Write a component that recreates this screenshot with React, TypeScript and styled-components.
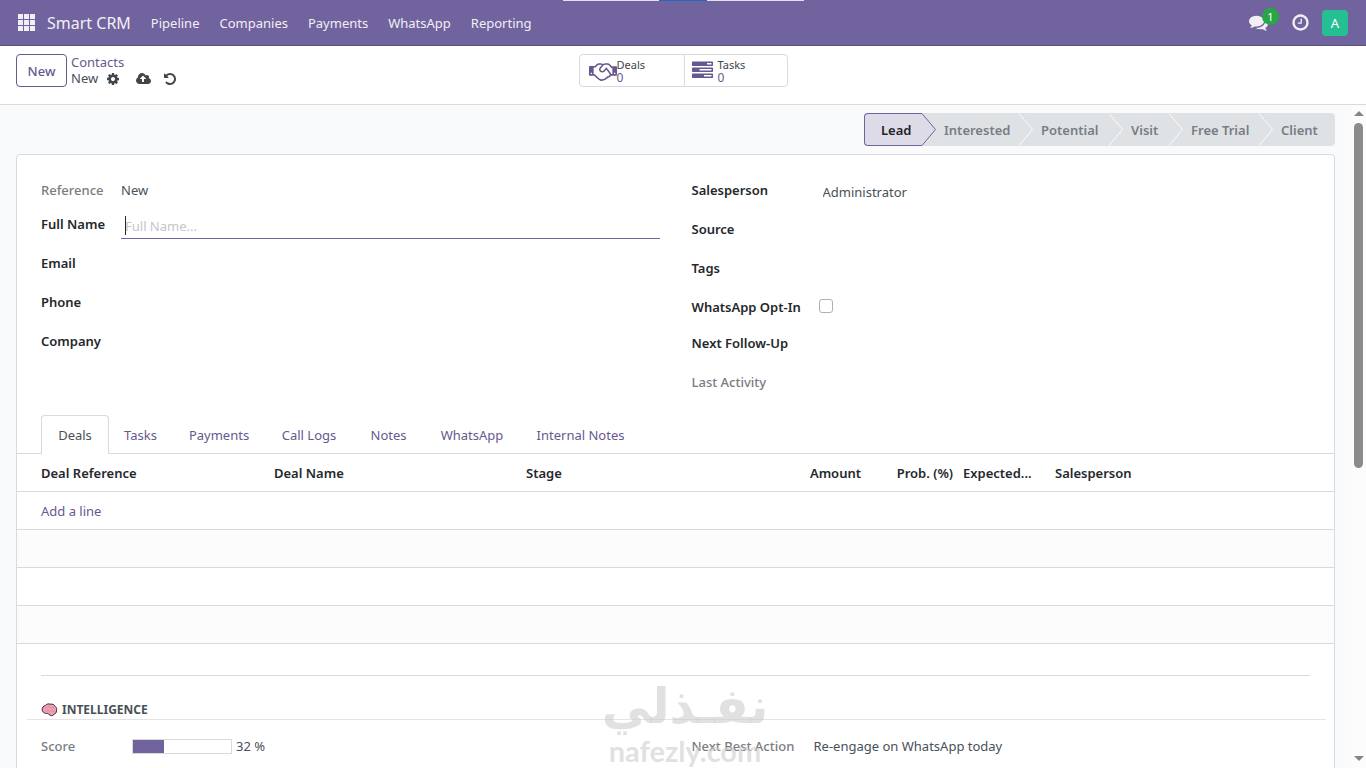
import React from "react";
import styled, { createGlobalStyle } from "styled-components";

const purple = "#71639e";
const linkColor = "#66598f";
const line = "#d8dadd";

const GlobalStyle = createGlobalStyle`
  *, *::before, *::after { box-sizing: border-box; }
  body {
    margin: 0;
    background: #fff;
    color: #495057;
    font: 400 13px/20px "Noto Sans", "Open Sans", sans-serif;
  }
  button, input { font: inherit; color: inherit; }
  button { background: none; border: 0; padding: 0; cursor: pointer; }
  a { text-decoration: none; color: inherit; }
`;

const Page = styled.div`
  position: relative;
  display: flex;
  flex-direction: column;
  height: 100vh;
  overflow: hidden;
`;

/* ---------- top navigation ---------- */

const Navbar = styled.header`
  position: relative;
  flex: none;
  display: flex;
  align-items: center;
  justify-content: space-between;
  height: 46px;
  padding: 0 18px;
  background: ${purple};
  border-bottom: 1px solid #5a4f7f;
  color: #f1eff5;
`;

const LoadStrip = styled.div`
  position: absolute;
  top: 0;
  left: 50%;
  width: 241px;
  height: 1px;
  margin-left: -120px;
  background: linear-gradient(90deg, #e2dfee 96px, #2668c0 96px, #2668c0 144px, #e2dfee 144px);
`;

const NavLinks = styled.nav`
  display: flex;
  align-items: center;
  gap: 20px;
`;

const NavLink = styled.a`
  font-size: 13px;
`;

const Brand = styled.a`
  margin-left: -8px;
  font-size: 16px;
`;

const Systray = styled.div`
  display: flex;
  align-items: center;
  gap: 12px;
`;

const TrayButton = styled.button`
  position: relative;
  display: flex;
  width: 30px;
  color: #f1eff5;
`;

const ClockButton = styled(TrayButton)`
  width: 19px;
`;

const Badge = styled.span`
  position: absolute;
  top: -5px;
  left: 13px;
  width: 17px;
  height: 17px;
  border-radius: 9px;
  background: #28a745;
  color: #fff;
  font-size: 11px;
  line-height: 17px;
  text-align: center;
`;

const Avatar = styled.button`
  width: 26px;
  height: 26px;
  border-radius: 4px;
  background: #24bf92;
  color: #fff;
`;

/* ---------- control panel ---------- */

const ControlPanel = styled.div`
  flex: none;
  display: grid;
  grid-template-columns: 1fr auto 1fr;
  align-items: start;
  height: 59px;
  padding: 8px 16px;
  border-bottom: 1px solid ${line};
`;

const CrumbArea = styled.div`
  display: flex;
  gap: 4px;
`;

const NewButton = styled.button`
  width: 51px;
  height: 33px;
  border: 1px solid ${linkColor};
  border-radius: 4px;
  color: ${linkColor};
  font-weight: 500;
`;

const Crumbs = styled.div`
  line-height: 17px;
`;

const CrumbLink = styled.a`
  display: block;
  height: 16px;
  color: ${linkColor};
`;

const CrumbRow = styled.div`
  display: flex;
  align-items: center;
`;

const IconButton = styled.button<{ $gap: number }>`
  display: flex;
  margin-left: ${(p) => p.$gap}px;
  color: #41464c;
`;

const StatBox = styled.div`
  display: flex;
  width: 209px;
  height: 33px;
  border: 1px solid ${line};
  border-radius: 4px;
`;

const StatButton = styled.button<{ $gap: number }>`
  flex: 1;
  display: flex;
  align-items: center;
  gap: ${(p) => p.$gap}px;
  padding-left: ${(p) => (p.$gap ? 7 : 9)}px;
  color: ${linkColor};
  text-align: left;
  & + & { border-left: 1px solid ${line}; }
`;

const StatText = styled.span`
  display: flex;
  flex-direction: column;
  font-size: 11px;
  line-height: 13px;
`;

const StatLabel = styled.span`
  color: #41464c;
`;

const StatCount = styled.span`
  font-size: 12px;
`;

/* ---------- form body ---------- */

const Main = styled.div`
  flex: 1;
  min-height: 0;
  display: flex;
  background: #f9fafb;
`;

const FormView = styled.main`
  flex: 1;
  min-width: 0;
  padding: 8px 16px 0;
  overflow: hidden;
`;

const ScrollTrack = styled.div`
  flex: none;
  display: flex;
  flex-direction: column;
  align-items: center;
  justify-content: space-between;
  width: 15px;
  padding: 6px 0 7px;
  background: #fcfcfc;
`;

const ScrollThumb = styled.div`
  width: 9px;
  height: 345px;
  margin: 7px 0 auto;
  border-radius: 5px;
  background: #8b8b8b;
`;

const ScrollArrow = styled.span<{ $down?: boolean }>`
  border: 5px solid transparent;
  border-top: ${(p) => (p.$down ? "5px solid #858585" : "0")};
  border-bottom: ${(p) => (p.$down ? "0" : "5px solid #858585")};
`;

const StatusBar = styled.div`
  display: flex;
  justify-content: flex-end;
  margin-bottom: 8px;
`;

const StageButton = styled.button<{ $width: number; $active?: boolean }>`
  position: relative;
  width: ${(p) => p.$width}px;
  height: 33px;
  padding: 0 10px 0 ${(p) => (p.$active ? 16 : 22)}px;
  border: 1px solid ${(p) => (p.$active ? purple : "#dfe2e4")};
  border-width: ${(p) => (p.$active ? "1px 0 1px 1px" : "0")};
  background: ${(p) => (p.$active ? "#dedbe8" : "#dfe2e4")};
  color: ${(p) => (p.$active ? "#1f2226" : "#777d84")};
  font-weight: 600;
  text-align: left;
  white-space: nowrap;
  &:first-child { border-radius: 4px 0 0 4px; }
  &:last-child { border-radius: 0 4px 4px 0; }
`;

const StageTip = styled.svg<{ $active?: boolean }>`
  position: absolute;
  z-index: 1;
  top: ${(p) => (p.$active ? -1 : 0)}px;
  left: 100%;
`;

const Sheet = styled.section`
  border: 1px solid ${line};
  border-radius: 4px 4px 0 0;
  background: #fff;
  min-height: 100%;
`;

const Groups = styled.div`
  display: grid;
  grid-template-columns: 1fr 1fr;
  gap: 32px;
  padding: 24px 24px 0;
`;

const Group = styled.div``;

const FieldRow = styled.div<{ $label: number; $height?: number }>`
  display: grid;
  grid-template-columns: ${(p) => p.$label}px 1fr;
  align-items: start;
  height: ${(p) => p.$height ?? 39}px;
`;

const FieldLabel = styled.label<{ $muted?: boolean }>`
  color: ${(p) => (p.$muted ? "#7a7c80" : "#24282c")};
  font-weight: ${(p) => (p.$muted ? 500 : 600)};
  line-height: 22px;
`;

const FieldValue = styled.span`
  line-height: 22px;
`;

const TextInput = styled.input<{ $focus?: boolean }>`
  width: 100%;
  height: 26px;
  padding: 0 4px;
  border: 0;
  border-bottom: 1px solid ${(p) => (p.$focus ? purple : "transparent")};
  outline: 0;
  background: transparent;
  &::placeholder { color: #c3c6ca; opacity: 1; }
`;

const InputWrap = styled.div`
  position: relative;
`;

const Caret = styled.span`
  position: absolute;
  top: 3px;
  left: 4px;
  width: 1px;
  height: 19px;
  background: #24282c;
`;

const OptIn = styled.input`
  appearance: none;
  width: 14px;
  height: 14px;
  margin: 3px 0;
  border: 1px solid #adb1b6;
  border-radius: 3px;
  background: #fff;
`;

/* ---------- notebook ---------- */

const Tabs = styled.div`
  display: flex;
  height: 39px;
  margin-top: 14px;
  padding: 0 24px;
  border-bottom: 1px solid ${line};
`;

const Tab = styled.button<{ $width: number; $active?: boolean }>`
  width: ${(p) => p.$width}px;
  height: 39px;
  border: 1px solid ${(p) => (p.$active ? line : "transparent")};
  border-bottom: 0;
  border-radius: 4px 4px 0 0;
  background: ${(p) => (p.$active ? "#fff" : "none")};
  color: ${(p) => (p.$active ? "#495057" : linkColor)};
  white-space: nowrap;
`;

const DealsTable = styled.table`
  width: 100%;
  table-layout: fixed;
  border-collapse: separate;
  border-spacing: 0;
`;

const Col = styled.col<{ $width?: number }>`
  width: ${(p) => (p.$width ? p.$width + "px" : "auto")};
`;

const HeadCell = styled.th<{ $right?: boolean }>`
  height: 38px;
  padding: 0 5px;
  border-bottom: 1px solid ${line};
  color: #24282c;
  font-weight: 600;
  text-align: ${(p) => (p.$right ? "right" : "left")};
  white-space: nowrap;
  &:first-child { padding-left: 24px; }
`;

const Cell = styled.td<{ $shaded?: boolean }>`
  height: 38px;
  padding: 0 24px;
  border-bottom: 1px solid ${line};
  background: ${(p) => (p.$shaded ? "#fcfcfc" : "#fff")};
`;

const AddLine = styled.a`
  color: ${linkColor};
`;

/* ---------- intelligence ---------- */

const Rule = styled.hr`
  height: 1px;
  margin: 31px 24px 24px;
  border: 0;
  background: ${line};
`;

const SectionTitle = styled.h2`
  display: flex;
  align-items: center;
  gap: 4px;
  margin: 0 8px 0 10px;
  padding: 0 14px;
  border-bottom: 1px solid #e2e4e6;
  color: #495057;
  font-size: 12px;
  font-weight: 700;
  line-height: 19px;
`;

const Insights = styled(Groups)`
  padding-top: 15px;
`;

const ScoreCell = styled.div`
  display: flex;
  align-items: center;
  gap: 4px;
  height: 22px;
`;

const ScoreTrack = styled.div`
  width: 100px;
  height: 15px;
  border: 1px solid ${line};
`;

const ScoreFill = styled.div`
  height: 100%;
  background: ${purple};
`;

const Watermark = styled.div`
  position: absolute;
  bottom: 0;
  left: 50%;
  width: 170px;
  height: 90px;
  margin-left: -83px;
  color: rgba(205, 205, 205, 0.6);
  text-align: center;
  white-space: nowrap;
  pointer-events: none;
`;

const WatermarkArabic = styled.div`
  font: 700 49px/58px "DejaVu Sans", sans-serif;
`;

const WatermarkLatin = styled.div`
  font: 700 29px/30px Lato, sans-serif;
`;

/* ---------- icons ---------- */

const glyphs = {
  comments: {
    w: 1792,
    d: "M1408 768q0 139-94 257t-256.500 186.500-353.500 68.500q-86 0-176-16-124 88-278 128-36 9-86 16h-3q-11 0-20.500-8t-11.500-21q-1-3-1-6.500t.5-6.500 2-6l2.500-5 3.500-5.500 4-5 4.500-5 4-4.500q5-6 23-25t26-29.500 22.500-29 25-38.500 20.500-44q-124-72-195-177t-71-224q0-139 94-257t256.500-186.500 353.500-68.500 353.500 68.500 256.500 186.500 94 257zm384 256q0 120-71 224.500t-195 176.500q10 24 20.500 44t25 38.500 22.500 29 26 29.500 23 25q1 1 4 4.500t4.500 5 4 5 3.500 5.500l2.500 5 2 6 .5 6.500-1 6.500q-3 14-13 22t-22 7q-50-7-86-16-154-40-278-128-90 16-176 16-271 0-472-132 58 4 88 4 161 0 309-45t264-129q125-92 192-212t67-254q0-77-23-152 129 71 204 178t75 230z",
  },
  clock: {
    w: 1792,
    d: "M1024 544v448q0 14-9 23t-23 9h-320q-14 0-23-9t-9-23v-64q0-14 9-23t23-9h224v-352q0-14 9-23t23-9h64q14 0 23 9t9 23zm416 352q0-148-73-273t-198-198-273-73-273 73-198 198-73 273 73 273 198 198 273 73 273-73 198-198 73-273zm224 0q0 209-103 385.500t-279.500 279.500-385.500 103-385.500-103-279.500-279.500-103-385.500 103-385.500 279.500-279.500 385.500-103 385.500 103 279.500 279.500 103 385.500z",
  },
  cog: {
    w: 1792,
    d: "M1152 896q0-106-75-181t-181-75-181 75-75 181 75 181 181 75 181-75 75-181zm512-109v222q0 12-8 23t-20 13l-185 28q-19 54-39 91 35 50 107 138 10 12 10 25t-9 23q-27 37-99 108t-94 71q-12 0-26-9l-138-108q-44 23-91 38-16 136-29 186-7 28-36 28h-222q-14 0-24.500-8.500t-11.500-21.500l-28-184q-49-16-90-37l-141 107q-10 9-25 9-14 0-25-11-126-114-165-168-7-10-7-23 0-12 8-23 15-21 51-66.500t54-70.500q-27-50-41-99l-183-27q-13-2-21-12.500t-8-23.500v-222q0-12 8-23t19-13l186-28q14-46 39-92-40-57-107-138-10-12-10-24 0-10 9-23 26-36 98.500-107.500t94.500-71.500q13 0 26 10l138 107q44-23 91-38 16-136 29-186 7-28 36-28h222q14 0 24.500 8.500t11.500 21.500l28 184q49 16 90 37l142-107q9-9 24-9 13 0 25 10 129 119 165 170 7 8 7 22 0 12-8 23-15 21-51 66.500t-54 70.500q26 50 41 98l183 28q13 2 21 12.500t8 23.500z",
  },
  upload: {
    w: 1920,
    d: "M1280 864q0-14-9-23l-352-352q-9-9-23-9t-23 9l-351 351q-10 12-10 24 0 14 9 23t23 9h224v352q0 13 9.500 22.500t22.500 9.500h192q13 0 22.500-9.500t9.500-22.500v-352h224q13 0 22.500-9.500t9.500-22.500zm640 288q0 159-112.500 271.500t-271.500 112.500h-1088q-185 0-316.500-131.500t-131.500-316.500q0-130 70-240t188-165q-2-30-2-43 0-212 150-362t362-150q156 0 285.500 87t188.500 231q71-62 166-62 106 0 181 75t75 181q0 76-41 138 130 31 213.500 135.500t83.500 238.500z",
  },
  undo: {
    w: 1792,
    d: "M1664 896q0 156-61 298t-164 245-245 164-298 61q-172 0-327-72.500t-264-204.500q-7-10-6.500-22.500t8.500-20.500l137-138q10-9 25-9 16 2 23 12 73 95 179 147t225 52q104 0 198.500-40.500t163.500-109.500 109.500-163.500 40.500-198.500-40.500-198.500-109.500-163.500-163.500-109.500-198.500-40.500q-98 0-188 35.500t-160 101.500l137 138q31 30 14 69-17 40-59 40h-448q-26 0-45-19t-19-45v-448q0-42 40-59 39-17 69 14l130 129q107-101 244.500-156.500t284.500-55.500q156 0 298 61t245 164 164 245 61 298z",
  },
  handshake: {
    w: 2304,
    d: "M192 1152q40 0 56-32t0-64-56-32-56 32 0 64 56 32zm1473-58q-10-13-38.500-50t-41.500-54-38-49-42.500-53-40.500-47-45-49l-125 140q-83 94-208.500 92t-205.500-98q-57-69-56.500-158t58.500-157l177-206q-22-11-51-16.500t-47.500-6-56.500 .5-49 1q-92 0-158 66l-158 158h-155v544q5 0 21-.5t22 0 19.500 2 20.500 4.500 17.500 8.500 18.500 13.500l297 292q115 111 227 111 78 0 125-47 57 20 112.500-8t72.500-85q74 6 127-44 20-18 36-45.500t14-50.500q10 10 43 10 43 0 77-21t49.500-53 12-71.500-30.500-73.500zm159 58h96v-512h-93l-157-180q-66-76-169-76h-167q-89 0-146 67l-209 243q-28 33-28 75t27 75q43 51 110 52t111-49l193-218q25-23 53.500-21.500t47 27 8.500 56.500q16 19 56 63t60 68q29 36 82.500 105.500t64.500 84.500q52 66 60 140zm288 0q40 0 56-32t0-64-56-32-56 32 0 64 56 32zm192-576v640q0 26-19 45t-45 19h-434q-27 65-82 106.500t-125 51.500q-33 48-80.500 81.500t-102.500 45.500q-42 53-104.500 81.500t-128.500 24.500q-60 34-126 39.500t-127.500-14-117-53.500-103.500-81l-287-282h-358q-26 0-45-19t-19-45v-672q0-26 19-45t45-19h421q14-14 47-48t47.500-48 44-40 50.500-37.500 51-25.500 62-19.500 68-5.500h117q99 0 181 56 82-56 181-56h167q35 0 67 6t56.500 14.500 51.500 26.500 44.500 31 43 39.500 39 42 41 48 41.500 48.500h355q26 0 45 19t19 45z",
  },
  tasks: {
    w: 1792,
    d: "M1024 1408h640v-128h-640v128zm-384-512h1024v-128h-1024v128zm640-512h384v-128h-384v128zm512 832v256q0 26-19 45t-45 19h-1664q-26 0-45-19t-19-45v-256q0-26 19-45t45-19h1664q26 0 45 19t19 45zm0-512v256q0 26-19 45t-45 19h-1664q-26 0-45-19t-19-45v-256q0-26 19-45t45-19h1664q26 0 45 19t19 45zm0-512v256q0 26-19 45t-45 19h-1664q-26 0-45-19t-19-45v-256q0-26 19-45t45-19h1664q26 0 45 19t19 45z",
  },
};

function Glyph({ name, size }: { name: keyof typeof glyphs; size: number }) {
  const g = glyphs[name];
  return (
    <svg width={Math.round((size * g.w) / 1792)} height={size} viewBox={`0 0 ${g.w} 1792`} fill="currentColor" aria-hidden>
      <path d={g.d} />
    </svg>
  );
}

function AppsIcon() {
  return (
    <svg width="17" height="17" viewBox="0 0 17 17" fill="currentColor" aria-hidden>
      {[0, 6, 12].map((y) => [0, 6, 12].map((x) => <rect key={`${x}-${y}`} x={x} y={y} width="5" height="5" />))}
    </svg>
  );
}

function BrainIcon() {
  return (
    <svg width="17" height="14" viewBox="0 0 17 14" aria-hidden>
      <path
        d="M1.200 7.200C1 4.800 2.600 2.800 4.500 2.300 5.800.8 8 .6 9.300 1.200c2.200-.4 4.200.5 4.900 2.200 1.400 1 1.900 2.900 1.200 4.500.2 1.600-.7 2.700-2 2.900-.5 1.400-2.400 2.300-3.900 1.600-1.200-.3-2-1.200-2.400-2C5 10.800 1.900 10.300 1.200 7.200z"
        fill="#f0a0b4"
        stroke="#3b2a30"
        strokeWidth="1"
      />
      <path d="M4 5.500c1-1 2-.8 2.600 0M7.500 3.200c1 .2 1.400 1 1 2M10.500 4.600c1.200-.5 2.200 0 2.400 1M5.500 8.300c1.200-.9 2.400-.6 3.300.2M10.500 8.500c1-.6 2-.3 2.800.4" fill="none" stroke="#dd859b" strokeWidth="1" />
    </svg>
  );
}

/* ---------- data ---------- */

const navItems = ["Pipeline", "Companies", "Payments", "WhatsApp", "Reporting"];

const stages = [
  { name: "Lead", width: 58 },
  { name: "Interested", width: 97 },
  { name: "Potential", width: 90 },
  { name: "Visit", width: 60 },
  { name: "Free Trial", width: 90 },
  { name: "Client", width: 76 },
];

const tabs = [
  { name: "Deals", width: 68 },
  { name: "Tasks", width: 63 },
  { name: "Payments", width: 94 },
  { name: "Call Logs", width: 86 },
  { name: "Notes", width: 73 },
  { name: "WhatsApp", width: 94 },
  { name: "Internal Notes", width: 123 },
];

const score = 32;

export default function App() {
  return (
    <Page>
      <GlobalStyle />
      <Navbar>
        <LoadStrip />
        <NavLinks>
          <AppsIcon />
          <Brand href="#">Smart CRM</Brand>
          {navItems.map((item) => (
            <NavLink key={item} href="#">{item}</NavLink>
          ))}
        </NavLinks>
        <Systray>
          <TrayButton aria-label="Messages">
            <Glyph name="comments" size={19} />
            <Badge>1</Badge>
          </TrayButton>
          <ClockButton aria-label="Activities">
            <Glyph name="clock" size={19} />
          </ClockButton>
          <Avatar>A</Avatar>
        </Systray>
      </Navbar>

      <ControlPanel>
        <CrumbArea>
          <NewButton>New</NewButton>
          <Crumbs>
            <CrumbLink href="#">Contacts</CrumbLink>
            <CrumbRow>
              <span>New</span>
              <IconButton $gap={8} aria-label="Settings"><Glyph name="cog" size={14} /></IconButton>
              <IconButton $gap={16} aria-label="Save"><Glyph name="upload" size={14} /></IconButton>
              <IconButton $gap={12} aria-label="Discard"><Glyph name="undo" size={14} /></IconButton>
            </CrumbRow>
          </Crumbs>
        </CrumbArea>
        <StatBox>
          <StatButton $gap={0}>
            <Glyph name="handshake" size={22} />
            <StatText><StatLabel>Deals</StatLabel><StatCount>0</StatCount></StatText>
          </StatButton>
          <StatButton $gap={5}>
            <Glyph name="tasks" size={21} />
            <StatText><StatLabel>Tasks</StatLabel><StatCount>0</StatCount></StatText>
          </StatButton>
        </StatBox>
      </ControlPanel>

      <Main>
        <FormView>
          <StatusBar>
            {stages.map((stage, i) => (
              <StageButton key={stage.name} $width={stage.width} $active={i === 0}>
                {stage.name}
                {i < stages.length - 1 && (
                  <StageTip $active={i === 0} width="15" height="33" viewBox="0 0 15 33" aria-hidden>
                    <path d="M0 0.500L13.500 16.500L0 32.500z" fill={i === 0 ? "#dedbe8" : "#dfe2e4"} />
                    <path d="M0 0.500L13.500 16.500L0 32.500" fill="none" stroke={i === 0 ? purple : "#f9fafb"} />
                  </StageTip>
                )}
              </StageButton>
            ))}
          </StatusBar>

          <Sheet>
            <Groups>
              <Group>
                <FieldRow $label={80} $height={34}>
                  <FieldLabel as="span" $muted>Reference</FieldLabel>
                  <FieldValue>New</FieldValue>
                </FieldRow>
                <FieldRow $label={80}>
                  <FieldLabel htmlFor="full-name">Full Name</FieldLabel>
                  <InputWrap>
                    <TextInput id="full-name" $focus placeholder="Full Name..." />
                    <Caret />
                  </InputWrap>
                </FieldRow>
                {["Email", "Phone", "Company"].map((name) => (
                  <FieldRow key={name} $label={80}>
                    <FieldLabel htmlFor={name}>{name}</FieldLabel>
                    <TextInput id={name} />
                  </FieldRow>
                ))}
              </Group>
              <Group>
                <FieldRow $label={127}>
                  <FieldLabel htmlFor="salesperson">Salesperson</FieldLabel>
                  <TextInput id="salesperson" defaultValue="Administrator" />
                </FieldRow>
                {["Source", "Tags"].map((name) => (
                  <FieldRow key={name} $label={127}>
                    <FieldLabel htmlFor={name}>{name}</FieldLabel>
                    <TextInput id={name} />
                  </FieldRow>
                ))}
                <FieldRow $label={127} $height={36}>
                  <FieldLabel htmlFor="opt-in">WhatsApp Opt-In</FieldLabel>
                  <OptIn type="checkbox" id="opt-in" />
                </FieldRow>
                <FieldRow $label={127}>
                  <FieldLabel htmlFor="follow-up">Next Follow-Up</FieldLabel>
                  <TextInput id="follow-up" />
                </FieldRow>
                <FieldRow $label={127} $height={30}>
                  <FieldLabel as="span" $muted>Last Activity</FieldLabel>
                </FieldRow>
              </Group>
            </Groups>

            <Tabs role="tablist">
              {tabs.map((tab, i) => (
                <Tab key={tab.name} role="tab" aria-selected={i === 0} $width={tab.width} $active={i === 0}>
                  {tab.name}
                </Tab>
              ))}
            </Tabs>

            <DealsTable>
              <colgroup>
                <Col /><Col /><Col />
                <Col $width={93} /><Col $width={92} /><Col $width={92} />
                <Col /><Col $width={32} />
              </colgroup>
              <thead>
                <tr>
                  <HeadCell>Deal Reference</HeadCell>
                  <HeadCell>Deal Name</HeadCell>
                  <HeadCell>Stage</HeadCell>
                  <HeadCell $right>Amount</HeadCell>
                  <HeadCell $right>Prob. (%)</HeadCell>
                  <HeadCell>Expected...</HeadCell>
                  <HeadCell>Salesperson</HeadCell>
                  <HeadCell />
                </tr>
              </thead>
              <tbody>
                <tr><Cell colSpan={8}><AddLine href="#">Add a line</AddLine></Cell></tr>
                <tr><Cell colSpan={8} $shaded /></tr>
                <tr><Cell colSpan={8} /></tr>
                <tr><Cell colSpan={8} $shaded /></tr>
              </tbody>
            </DealsTable>

            <Rule />
            <SectionTitle><BrainIcon />INTELLIGENCE</SectionTitle>
            <Insights>
              <FieldRow $label={91}>
                <FieldLabel as="span" $muted>Score</FieldLabel>
                <ScoreCell>
                  <ScoreTrack><ScoreFill style={{ width: `${score}%` }} /></ScoreTrack>
                  <span>{score} %</span>
                </ScoreCell>
              </FieldRow>
              <FieldRow $label={122}>
                <FieldLabel as="span" $muted>Next Best Action</FieldLabel>
                <FieldValue>Re-engage on WhatsApp today</FieldValue>
              </FieldRow>
            </Insights>
          </Sheet>
        </FormView>
        <ScrollTrack>
          <ScrollArrow />
          <ScrollThumb />
          <ScrollArrow $down />
        </ScrollTrack>
      </Main>

      <Watermark>
        <WatermarkArabic lang="ar" dir="rtl">نفـذلي</WatermarkArabic>
        <WatermarkLatin>nafezly.com</WatermarkLatin>
      </Watermark>
    </Page>
  );
}
